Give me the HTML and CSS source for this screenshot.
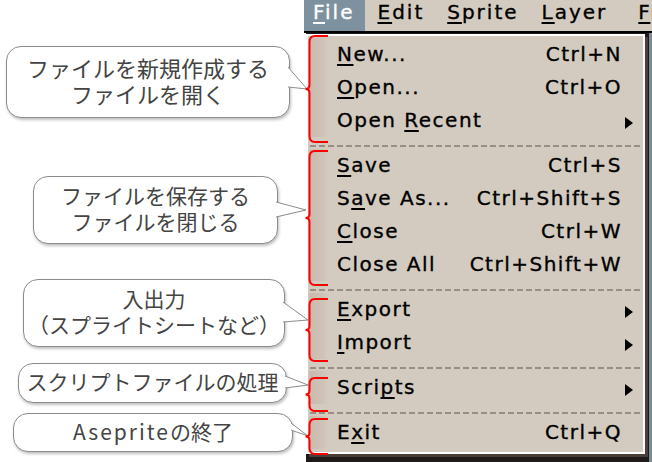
FILE: index.html
```html
<!DOCTYPE html>
<html lang="ja">
<head>
<meta charset="utf-8">
<title>Aseprite - File menu</title>
<link rel="stylesheet" href="styles.css">
</head>
<body>
<div class="screen">
  <aside class="notes">
    <div class="note note-new">
      <p>ファイルを新規作成する<br>ファイルを開く</p>
      <svg class="tail" width="22" height="25" viewBox="0 0 22 25"><path d="M0 1 L19 23 L0 21"/></svg>
    </div>
    <div class="note note-save">
      <p>ファイルを保存する<br>ファイルを閉じる</p>
      <svg class="tail" width="32" height="18" viewBox="0 0 32 18"><path d="M0 1 L30 9 L0 16"/></svg>
    </div>
    <div class="note note-io">
      <p>入出力<br>（スプライトシートなど）</p>
      <svg class="tail" width="27" height="23" viewBox="0 0 27 23"><path d="M0 1 L25 19 L0 21"/></svg>
    </div>
    <div class="note note-script">
      <p>スクリプトファイルの処理</p>
      <svg class="tail" width="25" height="15" viewBox="0 0 25 15"><path d="M0 1 L23 10 L0 13"/></svg>
    </div>
    <div class="note note-exit">
      <p><span class="latin">Aseprite</span>の終了</p>
      <svg class="tail" width="19" height="16" viewBox="0 0 19 16"><path d="M0 1 L17 14 L0 8"/></svg>
    </div>
  </aside>

  <main class="app">
    <nav class="menubar">
      <span class="mb-item active"><u>F</u>ile</span>
      <span class="mb-item"><u>E</u>dit</span>
      <span class="mb-item"><u>S</u>prite</span>
      <span class="mb-item"><u>L</u>ayer</span>
      <span class="mb-item last"><u>F</u>rame</span>
    </nav>
    <div class="desk">
      <div class="popup">
        <div class="group g1">
          <svg class="brace" width="26" height="108" viewBox="0 0 26 108"><path d="M25 1 H12 Q6.5 1 6.5 7 V50 Q6.5 54 2.5 54 Q6.5 54 6.5 58 V101 Q6.5 107 12 107 H25"/></svg>
          <div class="row"><span class="label"><u>N</u>ew...</span><span class="key">Ctrl+N</span><span class="sub"></span></div>
          <div class="row"><span class="label"><u>O</u>pen...</span><span class="key">Ctrl+O</span><span class="sub"></span></div>
          <div class="row"><span class="label">Open <u>R</u>ecent</span><span class="sub"><i class="arrow"></i></span></div>
        </div>
        <div class="sep"></div>
        <div class="group g2">
          <svg class="brace" width="26" height="136" viewBox="0 0 26 136"><path d="M25 1 H12 Q6.5 1 6.5 7 V64 Q6.5 68 2.5 68 Q6.5 68 6.5 72 V129 Q6.5 135 12 135 H25"/></svg>
          <div class="row"><span class="label"><u>S</u>ave</span><span class="key">Ctrl+S</span><span class="sub"></span></div>
          <div class="row"><span class="label">S<u>a</u>ve As...</span><span class="key">Ctrl+Shift+S</span><span class="sub"></span></div>
          <div class="row"><span class="label"><u>C</u>lose</span><span class="key">Ctrl+W</span><span class="sub"></span></div>
          <div class="row"><span class="label">Close All</span><span class="key">Ctrl+Shift+W</span><span class="sub"></span></div>
        </div>
        <div class="sep"></div>
        <div class="group g3">
          <svg class="brace" width="26" height="64" viewBox="0 0 26 64"><path d="M25 1 H12 Q6.5 1 6.5 7 V28 Q6.5 32 2.5 32 Q6.5 32 6.5 36 V57 Q6.5 63 12 63 H25"/></svg>
          <div class="row"><span class="label"><u>E</u>xport</span><span class="sub"><i class="arrow"></i></span></div>
          <div class="row"><span class="label"><u>I</u>mport</span><span class="sub"><i class="arrow"></i></span></div>
        </div>
        <div class="sep"></div>
        <div class="group g4">
          <svg class="brace" width="26" height="35" viewBox="0 0 26 35"><path d="M25 1 H12 Q6.5 1 6.5 7 V13.5 Q6.5 17.5 2.5 17.5 Q6.5 17.5 6.5 21.5 V28 Q6.5 34 12 34 H25"/></svg>
          <div class="row"><span class="label">Scri<u>p</u>ts</span><span class="sub"><i class="arrow"></i></span></div>
        </div>
        <div class="sep"></div>
        <div class="group g5">
          <svg class="brace" width="26" height="37" viewBox="0 0 26 37"><path d="M25 1 H12 Q6.5 1 6.5 7 V14.5 Q6.5 18.5 2.5 18.5 Q6.5 18.5 6.5 22.5 V30 Q6.5 36 12 36 H25"/></svg>
          <div class="row"><span class="label">E<u>x</u>it</span><span class="key">Ctrl+Q</span><span class="sub"></span></div>
        </div>
      </div>
    </div>
  </main>
</div>
</body>
</html>
```

FILE: styles.css
```css
* { box-sizing: border-box; }

html, body {
  margin: 0;
  padding: 0;
}

body {
  width: 652px;
  height: 462px;
  overflow: hidden;
  background: #fff;
}

.screen {
  display: flex;
  width: 652px;
  height: 462px;
}

/* ---------- annotation callouts ---------- */
.notes {
  width: 304px;
  flex: none;
  display: flex;
  flex-direction: column;
  align-items: flex-start;
  font-family: "Noto Sans CJK JP", "Noto Sans", sans-serif;
  font-size: 21px;
  line-height: 26px;
  color: #444;
}

.note {
  position: relative;
  display: flex;
  align-items: center;
  justify-content: center;
  text-align: center;
  padding-bottom: 4px;
  background: #fff;
  border: 1px solid #8c8c8c;
  border-radius: 15px;
  box-shadow: 1px 2px 3px rgba(0, 0, 0, 0.25);
}

.note p { margin: 0; white-space: nowrap; }

.latin { letter-spacing: 2px; }

.note-new    { margin: 46px 0 0 6px;  width: 284px; height: 72px; font-size: 22px; }
.note-save   { margin: 58px 0 0 33px; width: 245px; height: 68px; }
.note-io     { margin: 35px 0 0 23px; width: 262px; height: 68px; }
.note-script { margin: 16px 0 0 18px; width: 269px; height: 40px; }
.note-exit   { margin: 10px 0 0 13px; width: 280px; height: 39px; }

.tail {
  position: absolute;
  left: calc(100% - 1px);
  z-index: 2;
  overflow: visible;
  fill: #fff;
  stroke: #8c8c8c;
  stroke-width: 1;
}

.note-new .tail    { top: 19px; }
.note-save .tail   { top: 24px; }
.note-io .tail     { top: 21px; }
.note-script .tail { top: 11px; }
.note-exit .tail   { top: 8px; }

/* ---------- Aseprite window ---------- */
.app {
  width: 348px;
  flex: none;
  display: flex;
  flex-direction: column;
  font-family: "DejaVu Sans", sans-serif;
  font-size: 20px;
  color: #000;
  -webkit-text-stroke: 0.35px currentColor;
}

u {
  text-decoration: underline;
  text-decoration-thickness: 2px;
  text-underline-offset: 3px;
  text-decoration-skip-ink: none;
}

.menubar {
  height: 33px;
  flex: none;
  display: flex;
  background: #d3cbbf;
  border-bottom: 2px solid #000;
  white-space: nowrap;
  overflow: hidden;
  letter-spacing: 2px;
}

.mb-item {
  height: 31px;
  line-height: 24px;
  padding: 0 11px 0 12px;
}

.mb-item.active {
  background: #7d919e;
  color: #fff;
  padding-left: 9px;
}

.mb-item.last { padding-left: 20px; }

.desk {
  flex: 1;
  border-left: 2px solid #fff;
  padding-top: 1px;
  background: linear-gradient(to right, #1d1a19 0 343px, #7b8c99 343px);
}

.popup {
  width: 339px;
  background: #d3cbbf;
  border: 2px solid #fff;
  padding: 2px 0 3px;
  box-shadow: 3px 3px 0 #4a3e39;
  letter-spacing: 1.5px;
}

.group {
  position: relative;
  background-image: linear-gradient(to right,
    rgba(160, 95, 85, 0) 0,
    rgba(160, 95, 85, 0.16) 2px,
    rgba(160, 95, 85, 0.08) 15px,
    rgba(160, 95, 85, 0) 20px);
}

.brace {
  position: absolute;
  left: -5px;
  z-index: 3;
  overflow: visible;
  fill: none;
  stroke: #f00;
  stroke-width: 2;
}

.g1 .brace { top: -3px; }
.g2 .brace { top: 1px; }
.g3 .brace { top: 5px; }
.g4 .brace { top: 6px; }
.g5 .brace { top: 2px; }

.row {
  display: flex;
  align-items: center;
  height: 33px;
  line-height: 33px;
  padding: 0 10px 0 29px;
  white-space: nowrap;
}

.label { flex: 1; }

.sub {
  width: 11px;
  align-self: stretch;
  display: flex;
  align-items: center;
  justify-content: flex-end;
}

.arrow {
  display: block;
  flex: none;
  width: 0;
  height: 0;
  margin-top: 5px;
  border-left: 8px solid #000;
  border-top: 6px solid transparent;
  border-bottom: 6px solid transparent;
}

.sep {
  height: 12px;
  padding-top: 8px;
}

.sep::after {
  content: "";
  display: block;
  height: 2px;
  margin: 0 2px;
  background: repeating-linear-gradient(to right, #9a8d83 0 6px, transparent 6px 9px);
}
```
